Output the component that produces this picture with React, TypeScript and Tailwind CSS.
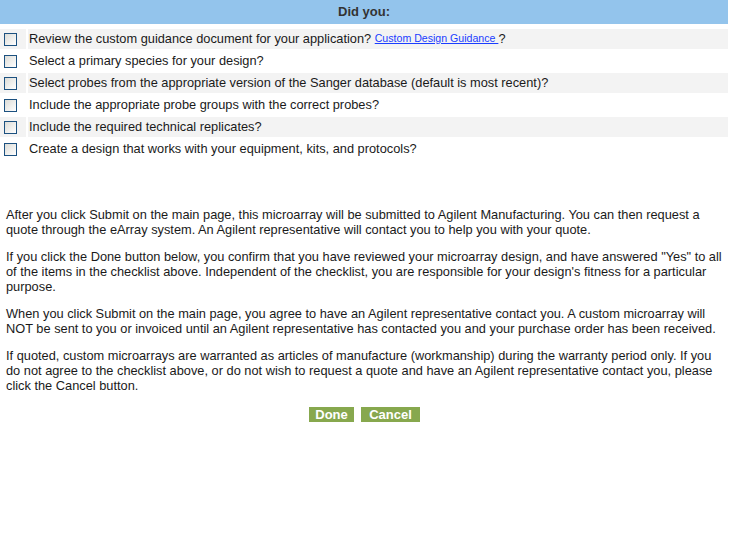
const items = [
    'Review the custom guidance document for your application?',
    'Select a primary species for your design?',
    'Select probes from the appropriate version of the Sanger database (default is most recent)?',
    'Include the appropriate probe groups with the correct probes?',
    'Include the required technical replicates?',
    'Create a design that works with your equipment, kits, and protocols?',
];

function Checkbox() {
    return (
        <span className="block h-[13px] w-[13px] border border-[#1c5180] bg-gradient-to-br from-[#dcdcd7] to-[#ffffff]"></span>
    );
}

export default function App() {
    return (
        <div className="w-[731px] bg-white font-['Liberation_Sans',Arial,sans-serif] text-[12.8px] text-[#1a1a1a]">
            <div className="w-[728px]">
                <div className="flex h-[24px] items-center justify-center bg-[#93c4ec] text-[13px] font-bold text-[#333]">
                    Did you:
                </div>
                <div className="flex flex-col gap-[2px] pt-[5px]">
                    {items.map((text, i) => (
                        <div key={i} className="flex h-[20px] gap-[2px]">
                            <div
                                className={`flex w-[26px] items-center pl-[4px] ${i % 2 === 0 ? 'bg-[#f3f3f3]' : ''}`}
                            >
                                <Checkbox />
                            </div>
                            <div
                                className={`flex flex-1 items-center pl-[1px] ${i % 2 === 0 ? 'bg-[#f3f3f3]' : ''}`}
                            >
                                {text}
                                {i === 0 && (
                                    <>
                                        &nbsp;
                                        <a href="#" className="text-[10.6px] text-[#1a3dff] underline">
                                            Custom Design Guidance&nbsp;
                                        </a>
                                        ?
                                    </>
                                )}
                            </div>
                        </div>
                    ))}
                </div>
            </div>

            <div className="mt-[48px] flex flex-col gap-[12px] px-[6px] leading-[15px]">
                <p>
                    After you click Submit on the main page, this microarray will be submitted to Agilent
                    Manufacturing. You can then request a quote through the eArray system. An Agilent representative
                    will contact you to help you with your quote.
                </p>
                <p>
                    If you click the Done button below, you confirm that you have reviewed your microarray design, and
                    have answered "Yes" to all of the items in the checklist above. Independent of the checklist, you
                    are responsible for your design's fitness for a particular purpose.
                </p>
                <p>
                    When you click Submit on the main page, you agree to have an Agilent representative contact you. A
                    custom microarray will NOT be sent to you or invoiced until an Agilent representative has contacted
                    you and your purchase order has been received.
                </p>
                <p>
                    If quoted, custom microarrays are warranted as articles of manufacture (workmanship) during the
                    warranty period only. If you do not agree to the checklist above, or do not wish to request a quote
                    and have an Agilent representative contact you, please click the Cancel button.
                </p>
            </div>

            <div className="mt-[14px] flex justify-center gap-[7px] pb-[117px] pr-[2px]">
                <button className="h-[15px] w-[45px] bg-[#87a84e] text-[13px] font-bold leading-[15px] text-white">
                    Done
                </button>
                <button className="h-[15px] w-[59px] bg-[#87a84e] text-[13px] font-bold leading-[15px] text-white">
                    Cancel
                </button>
            </div>
        </div>
    );
}
